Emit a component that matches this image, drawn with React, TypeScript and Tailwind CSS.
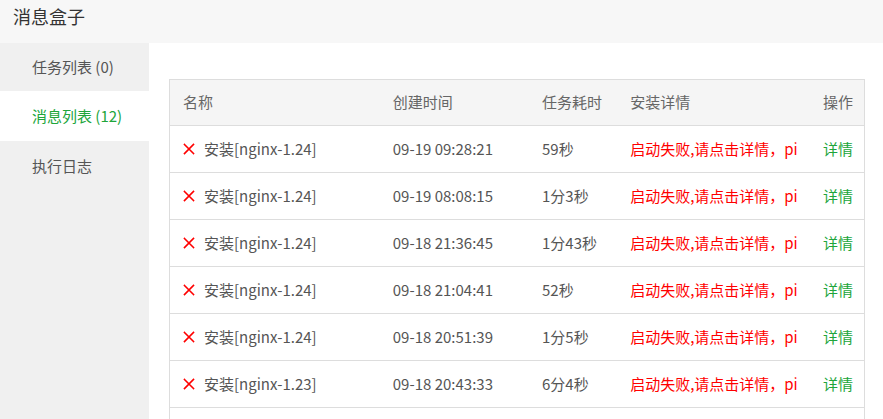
import React from "react";

const rows = [
  { name: "安装[nginx-1.24]", time: "09-19 09:28:21", cost: "59秒" },
  { name: "安装[nginx-1.24]", time: "09-19 08:08:15", cost: "1分3秒" },
  { name: "安装[nginx-1.24]", time: "09-18 21:36:45", cost: "1分43秒" },
  { name: "安装[nginx-1.24]", time: "09-18 21:04:41", cost: "52秒" },
  { name: "安装[nginx-1.24]", time: "09-18 20:51:39", cost: "1分5秒" },
  { name: "安装[nginx-1.23]", time: "09-18 20:43:33", cost: "6分4秒" },
  { name: "安装[nginx-1.23]", time: "09-18 20:30:12", cost: "5分2秒" },
  { name: "安装[nginx-1.22]", time: "09-18 20:11:08", cost: "48秒" },
];

function XIcon() {
  return (
    <svg width="12" height="12" viewBox="0 0 12 12" className="shrink-0">
      <path d="M1.5 1.5 L10.5 10.5 M10.5 1.5 L1.5 10.5" stroke="#f00" strokeWidth="1.6" strokeLinecap="square" fill="none" />
    </svg>
  );
}

export default function App() {
  return (
    <div
      className="w-[883px] h-[419px] overflow-hidden bg-white flex flex-col text-[15px] text-[#555]"
      style={{ fontFamily: '"Microsoft YaHei", "Noto Sans CJK SC", sans-serif' }}
    >
      <div className="h-[43px] shrink-0 bg-[#f7f7f7] pl-[13px] pt-[3px] text-[18px] leading-[26px] text-[#333]">
        消息盒子
      </div>
      <div className="flex flex-1 min-h-0">
        <div className="w-[149px] shrink-0 bg-[#f0f0f0] flex flex-col">
          <div className="h-[48px] flex items-center pl-[32px] text-[#555]">任务列表 (0)</div>
          <div className="h-[50px] flex items-center pl-[32px] bg-white text-[#20a53a]">消息列表 (12)</div>
          <div className="h-[50px] flex items-center pl-[32px] text-[#555]">执行日志</div>
        </div>
        <div className="flex-1 pl-[20px] pt-[36px]">
          <table className="w-[696px] table-fixed border-collapse border border-[#ddd]">
            <colgroup>
              <col className="w-[210px]" />
              <col className="w-[149px]" />
              <col className="w-[88px]" />
              <col className="w-[193px]" />
              <col className="w-[54px]" />
            </colgroup>
            <thead>
              <tr className="h-[46px] bg-[#f5f5f5] text-[#666]">
                <th className="px-[13px] text-left font-normal">名称</th>
                <th className="px-[13px] text-left font-normal">创建时间</th>
                <th className="px-[13px] text-left font-normal">任务耗时</th>
                <th className="px-[13px] text-left font-normal">安装详情</th>
                <th className="pr-[11px] text-right font-normal whitespace-nowrap">操作</th>
              </tr>
            </thead>
            <tbody>
              {rows.map((r, i) => (
                <tr key={i} className="h-[47px] border-t border-[#ddd]">
                  <td className="px-[13px]">
                    <div className="flex items-center gap-[9px]">
                      <XIcon />
                      <span className="whitespace-nowrap">{r.name}</span>
                    </div>
                  </td>
                  <td className="px-[13px] whitespace-nowrap">{r.time}</td>
                  <td className="px-[13px] whitespace-nowrap">{r.cost}</td>
                  <td className="px-[13px]">
                    <div className="overflow-hidden whitespace-nowrap text-[#f00]">启动失败,请点击详情，pip安装失败</div>
                  </td>
                  <td className="pr-[11px] text-right text-[#20a53a] whitespace-nowrap">详情</td>
                </tr>
              ))}
            </tbody>
          </table>
        </div>
      </div>
    </div>
  );
}
